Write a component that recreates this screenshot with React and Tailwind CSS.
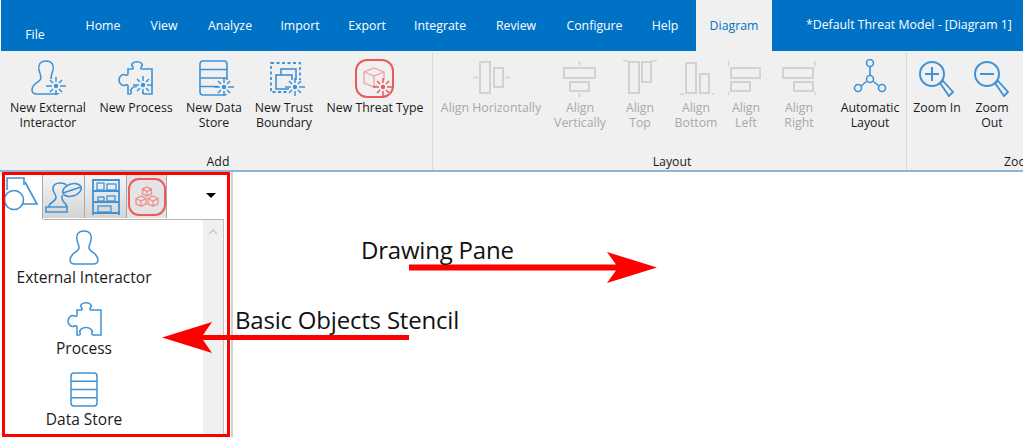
import React from "react";

const BLUE = "#3f92d6";
const GREY = "#d2d2d2";
const RED = "#e95b5b";

const personPath =
  "M15 1C9 1 7 5 8 10C8.6 13 10 15 10 18C10 22 1 23 1 30C1 33 3 34 6 34L24 34C27 34 29 33 29 30C29 23 20 22 20 18C20 15 21.4 13 22 10C23 5 21 1 15 1Z";
const puzzlePath =
  "M10 8L14 8C15.5 8 15.5 6.5 14.5 5.500C12.5 3 15 .8 19 .8C23 .8 25.5 3 23.5 5.500C22.5 6.500 22.5 8 24 8L34 8L34 33L26 33C24.5 33 24.5 31.5 25 30.500C26 28 23 25.500 19 25.500C15 25.500 12 28 13 30.500C13.5 31.500 13.5 33 12 33L10 33L10 25C10 23.500 8.500 23.500 7.500 24C5 25.500 1 23 1 19C1 15 5 12.500 7.500 14C8.500 14.500 10 14.500 10 13Z";

// little "new item" burst that sits on the ribbon icons
function Spark({ x, y, color = BLUE }) {
  return (
    <g stroke={color} strokeWidth="1.5" fill="none">
      <rect x={x - 6} y={y - 7} width="12" height="14" fill="#f0f0f0" stroke="none" />
      <circle cx={x} cy={y} r="2.2" fill={color} stroke="none" />
      <path
        d={`M${x} ${y - 9}V${y - 4}M${x} ${y + 4}V${y + 9}M${x - 10} ${y}H${x - 4}M${x + 4} ${y}H${x + 10}M${x - 6} ${y - 6}L${x - 3} ${y - 3}M${x + 6} ${y - 6}L${x + 3} ${y - 3}M${x - 6} ${y + 6}L${x - 3} ${y + 3}M${x + 6} ${y + 6}L${x + 3} ${y + 3}`}
      />
    </g>
  );
}

function RibbonIcon({ children, width = 44 }) {
  return (
    <svg width={width} height="40" viewBox={`0 0 ${width} 40`} fill="none" stroke={BLUE} strokeWidth="1.6">
      {children}
    </svg>
  );
}

const NewExternalIcon = () => (
  <RibbonIcon>
    <path d={personPath} transform="translate(5 1)" strokeWidth="1.5" />
    <Spark x={30} y={27} />
  </RibbonIcon>
);

const NewProcessIcon = () => (
  <RibbonIcon>
    <path d={puzzlePath} transform="translate(4 2)" strokeWidth="1.6" />
    <Spark x={29} y={26} />
  </RibbonIcon>
);

const NewDataIcon = () => (
  <RibbonIcon>
    <rect x="8" y="2" width="27" height="34" rx="3" />
    <path d="M8 10.5H35M8 19H35M8 27.5H35" />
    <Spark x={32} y={28} />
  </RibbonIcon>
);

const NewTrustIcon = () => (
  <RibbonIcon>
    <rect x="9" y="4" width="29" height="29" strokeDasharray="3 2.5" strokeWidth="1.8" />
    <rect x="19" y="10" width="15" height="12" />
    <rect x="14" y="16" width="16" height="14" fill="#f0f0f0" />
    <Spark x={33} y={28} />
  </RibbonIcon>
);

const NewThreatIcon = () => (
  <RibbonIcon>
    <rect x="3" y="1" width="37" height="37" rx="11" stroke={RED} strokeWidth="2" />
    <g stroke="#f0a0a0" strokeWidth="1.3">
      <path d="M21 9L31 13V24L21 28L11 24V13ZM11 13L21 17L31 13M21 17V28" />
    </g>
    <Spark x={30} y={28} color={RED} />
  </RibbonIcon>
);

const AlignH = () => (
  <RibbonIcon>
    <g stroke={GREY} strokeWidth="2">
      <rect x="11" y="3" width="10" height="31" />
      <rect x="25" y="9" width="9" height="19" />
      <path d="M4 18.5H9M36 18.5H41" strokeWidth="1.5" />
    </g>
  </RibbonIcon>
);

const AlignV = () => (
  <RibbonIcon>
    <g stroke={GREY} strokeWidth="2">
      <rect x="6" y="9" width="31" height="10" />
      <rect x="12" y="23" width="19" height="9" />
      <path d="M21.5 2V7M21.5 34V38" strokeWidth="1.5" />
    </g>
  </RibbonIcon>
);

const AlignTop = () => (
  <RibbonIcon>
    <g stroke={GREY} strokeWidth="2">
      <rect x="11" y="3" width="10" height="31" />
      <rect x="24" y="3" width="9" height="20" />
      <path d="M5 2H39" strokeWidth="1.5" strokeDasharray="5 22 7" />
    </g>
  </RibbonIcon>
);

const AlignBottom = () => (
  <RibbonIcon>
    <g stroke={GREY} strokeWidth="2">
      <rect x="12" y="4" width="10" height="30" />
      <rect x="26" y="15" width="9" height="19" />
      <path d="M6 35H40" strokeWidth="1.5" strokeDasharray="4 28 4" />
    </g>
  </RibbonIcon>
);

const AlignLeft = () => (
  <RibbonIcon>
    <g stroke={GREY} strokeWidth="2">
      <rect x="7" y="9" width="29" height="10" />
      <rect x="7" y="23" width="19" height="9" />
      <path d="M4.500 2V36" strokeWidth="1.5" strokeDasharray="5 26 6" />
    </g>
  </RibbonIcon>
);

const AlignRight = () => (
  <RibbonIcon>
    <g stroke={GREY} strokeWidth="2">
      <rect x="6" y="9" width="30" height="10" />
      <rect x="17" y="23" width="19" height="9" />
      <path d="M38 2V36" strokeWidth="1.5" strokeDasharray="5 26 6" />
    </g>
  </RibbonIcon>
);

const AutoLayoutIcon = () => (
  <RibbonIcon>
    <circle cx="22" cy="4" r="3.5" />
    <circle cx="22" cy="20" r="3.5" />
    <circle cx="10" cy="29" r="3.5" />
    <circle cx="34" cy="29" r="3.5" />
    <path d="M22 8V16M13 27L18.500 22.500M31 27L25.500 22.500" />
  </RibbonIcon>
);

const ZoomIcon = ({ plus }) => (
  <RibbonIcon>
    <circle cx="17" cy="15" r="12" strokeWidth="2" />
    <path d={plus ? "M10 15H24M17 8V22" : "M10 15H24"} strokeWidth="2" />
    <path d="M25 24L28 22L38 33L34 37Z" strokeWidth="1.8" />
  </RibbonIcon>
);

const ribbonAdd = [
  { w: "w-[88px]", Icon: NewExternalIcon, lines: ["New External", "Interactor"] },
  { w: "w-[88px]", Icon: NewProcessIcon, lines: ["New Process"] },
  { w: "w-[68px]", Icon: NewDataIcon, lines: ["New Data", "Store"] },
  { w: "w-[72px]", Icon: NewTrustIcon, lines: ["New Trust", "Boundary"] },
  { w: "w-[110px]", Icon: NewThreatIcon, lines: ["New Threat Type"] },
];

const ribbonLayout = [
  { w: "w-[106px]", Icon: AlignH, lines: ["Align Horizontally"], off: true },
  { w: "w-[72px]", Icon: AlignV, lines: ["Align", "Vertically"], off: true },
  { w: "w-[48px]", Icon: AlignTop, lines: ["Align", "Top"], off: true },
  { w: "w-[64px]", Icon: AlignBottom, lines: ["Align", "Bottom"], off: true },
  { w: "w-[36px]", Icon: AlignLeft, lines: ["Align", "Left"], off: true },
  { w: "w-[70px]", Icon: AlignRight, lines: ["Align", "Right"], off: true },
  { w: "w-[72px]", Icon: AutoLayoutIcon, lines: ["Automatic", "Layout"] },
];

function RibbonButton({ w, Icon, lines, off }) {
  return (
    <div className={`${w} shrink-0 flex flex-col items-center pt-[6px]`}>
      <div className="h-[41px] flex justify-center w-[44px] shrink-0">
        <Icon />
      </div>
      <div className={`text-[12.3px] leading-[15px] text-center whitespace-nowrap ${off ? "text-[#a9a9a9]" : "text-[#1a1a1a]"}`}>
        {lines.map((l) => (
          <div key={l}>{l}</div>
        ))}
      </div>
    </div>
  );
}

function RibbonGroup({ className, label, children }) {
  return (
    <div className={`h-full shrink-0 flex flex-col border-r border-[#d9d9d9] ${className}`}>
      <div className="flex flex-1">{children}</div>
      <div className="h-[20px] pt-[3px] flex justify-center text-[12.3px] leading-[18px] text-[#1a1a1a]">{label}</div>
    </div>
  );
}

const tabs = [
  { name: "File", w: "w-[68px]", cls: "pt-[26px]" },
  { name: "Home", w: "w-[68px]" },
  { name: "View", w: "w-[54px]" },
  { name: "Analyze", w: "w-[78px]" },
  { name: "Import", w: "w-[62px]" },
  { name: "Export", w: "w-[72px]" },
  { name: "Integrate", w: "w-[74px]" },
  { name: "Review", w: "w-[78px]" },
  { name: "Configure", w: "w-[79px]" },
  { name: "Help", w: "w-[62px]" },
];

export default function App() {
  return (
    <div className="relative w-[1023px] h-[437px] overflow-hidden bg-white font-['Open_Sans',sans-serif]">
      {/* TITLE / TABS */}
      <div className="ml-px h-[51px] bg-[#0072c6] flex text-white text-[12.3px]">
        {tabs.map((t) => (
          <div key={t.name} className={`${t.w} shrink-0 text-center ${t.cls || "pt-[17px]"}`}>
            {t.name}
          </div>
        ))}
        <div className="w-[76px] shrink-0 bg-[#f0f0f0] text-[#0072c6] text-center pt-[17px]">Diagram</div>
        <div className="ml-[34px] pt-[16px] whitespace-nowrap">*Default Threat Model - [Diagram 1]</div>
      </div>

      {/* RIBBON */}
      <div className="h-[121px] bg-[#f0f0f0] border-b-2 border-[#8fb4d4] flex pt-[2px]">
        <RibbonGroup className="w-[433px] pl-[4px]" label="Add">
          {ribbonAdd.map((b) => (
            <RibbonButton key={b.lines[0]} {...b} />
          ))}
        </RibbonGroup>
        <RibbonGroup className="w-[474px] pl-[5px]" label="Layout">
          {ribbonLayout.map((b) => (
            <RibbonButton key={b.lines.join()} {...b} />
          ))}
        </RibbonGroup>
        <div className="h-full flex flex-col">
          <div className="flex flex-1">
            <RibbonButton w="w-[60px]" Icon={() => <ZoomIcon plus />} lines={["Zoom In"]} />
            <RibbonButton w="w-[50px]" Icon={() => <ZoomIcon />} lines={["Zoom", "Out"]} />
          </div>
          <div className="h-[20px] pt-[3px] pl-[97px] text-[12.3px] leading-[18px] text-[#1a1a1a]">Zoom</div>
        </div>
      </div>

      {/* BODY */}
      <div className="flex h-[265px]">
        {/* Stencil panel */}
        <div className="ml-[2px] w-[228px] h-[265px] border-[3px] border-[#ff0000] flex flex-col shrink-0">
          <div className="h-[44px] flex">
            <div className="w-[38px] h-[44px] bg-white border-r border-[#a8a8a8] overflow-hidden">
              <svg width="37" height="36" viewBox="0 0 37 36" fill="none" stroke={BLUE} strokeWidth="1.6">
                <path d="M2 15V3H19V10" />
                <path d="M20 7L32 29H17" />
                <circle cx="9" cy="25" r="9.500" />
              </svg>
            </div>
            <div className="w-[42px] h-[43px] flex items-center justify-center border-r border-[#a8a8a8] bg-gradient-to-b from-[#f6f6f6] to-[#d4d4d4]">
              <svg width="37" height="32" viewBox="0 0 37 32" fill="none" stroke={BLUE} strokeWidth="1.6">
                <path d="M1 26H22V31H1Z" />
                <path d="M4 26C4 20 11 22 11 16C11 13 8 12 8 8C8 4 11 2 15 2C18 2 21 3 22 5" />
                <path d="M22 26C22 22 17 22 17 17C17 16 17 15 17.500 14" />
                <ellipse cx="27" cy="9" rx="9.500" ry="6" transform="rotate(-18 27 9)" />
                <path d="M18 12L36 6" />
              </svg>
            </div>
            <div className="w-[42px] h-[43px] flex items-center justify-center border-r border-[#a8a8a8] bg-gradient-to-b from-[#f6f6f6] to-[#d4d4d4]">
              <svg width="30" height="38" viewBox="0 0 30 38" fill="none" stroke={BLUE} strokeWidth="1.8">
                <path d="M2 1V37M28 1V37M2 2H28M2 13H28M2 24H28M2 35H28" />
                <rect x="6" y="5" width="7" height="7" strokeWidth="1.3" />
                <rect x="16" y="6" width="9" height="6" strokeWidth="1.3" />
                <rect x="7" y="19" width="6" height="4" strokeWidth="1.3" />
                <rect x="16" y="18" width="8" height="5" strokeWidth="1.3" />
                <rect x="7" y="28" width="13" height="6" strokeWidth="1.3" />
              </svg>
            </div>
            <div className="w-[40px] h-[43px] flex items-center justify-center border-r border-[#a8a8a8] bg-[#e4e4e4]">
              <svg width="38" height="38" viewBox="0 0 38 38" fill="none">
                <rect x="1" y="1" width="36" height="36" rx="10" stroke="#ee5a5a" strokeWidth="2" />
                <g stroke="#ee8a8a" strokeWidth="1.2">
                  <path d="M19 9L23.500 11V16L19 18L14.500 16V11ZM14.500 11L19 13.500L23.500 11M19 13.500V18" />
                  <path d="M13 18L18 20.500V26L13 28L8 26V20.500ZM8 20.500L13 23L18 20.500M13 23V28" />
                  <path d="M25 18L30 20.500V26L25 28L20 26V20.500ZM20 20.500L25 23L30 20.500M25 23V28" />
                </g>
              </svg>
            </div>
            <div className="flex-1 flex items-center justify-end pr-[11px] pb-[3px]">
              <div className="w-0 h-0 border-l-[5px] border-r-[5px] border-t-[5px] border-l-transparent border-r-transparent border-t-black"></div>
            </div>
          </div>
          <div className="h-px bg-[#b4b4b4] ml-[38px] mr-[3px]"></div>
          <div className="flex-1 flex min-h-0 pr-[3px]">
            <div className="flex-1 flex flex-col items-center pr-[40px] text-[15.5px] text-[#1a1a1a] leading-[20px] pt-[10px] overflow-hidden">
              <svg width="30" height="35" viewBox="0 0 30 35" fill="none" stroke={BLUE} strokeWidth="1.5" className="shrink-0">
                <path d={personPath} />
              </svg>
              <div className="mt-[2px] whitespace-nowrap">External Interactor</div>
              <svg width="35" height="34" viewBox="0 0 35 34" fill="none" stroke={BLUE} strokeWidth="1.5" className="shrink-0 mt-[15px]">
                <path d={puzzlePath} />
              </svg>
              <div className="mt-[2px]">Process</div>
              <svg width="28" height="35" viewBox="0 0 28 35" fill="none" stroke={BLUE} strokeWidth="1.5" className="shrink-0 mt-[14px]">
                <rect x="1" y="1" width="26" height="33" rx="3" />
                <path d="M1 9.200H27M1 17.500H27M1 25.800H27" />
              </svg>
              <div className="mt-[2px] whitespace-nowrap">Data Store</div>
            </div>
            <div className="w-[21px] shrink-0 bg-[#f0f0f0] border-r border-[#c4c4c4] flex justify-center pt-[9px]">
              <svg width="10" height="6" viewBox="0 0 10 6" fill="none" stroke="#c8c8c8" strokeWidth="1.5">
                <path d="M1 5L5 1L9 5" />
              </svg>
            </div>
          </div>
        </div>
        {/* Drawing pane */}
        <div className="ml-[1px] flex-1 border-l-2 border-[#d0d0d0] bg-white"></div>
      </div>

      {/* ANNOTATIONS */}
      <svg className="absolute left-0 top-0 pointer-events-none" width="1023" height="437" viewBox="0 0 1023 437" fill="#ff0000">
        <path d="M409 264.500H616L607 252L657 267.500L607 283L616 270.500H409Z" />
        <path d="M409 335H203L212 322L162 337.500L212 353L203 340H409Z" />
      </svg>
      <div className="absolute left-[361px] top-[234px] text-[24px] leading-[32px] text-[#111] whitespace-nowrap tracking-[-0.2px]">
        Drawing Pane
      </div>
      <div className="absolute left-[235px] top-[304px] text-[24px] leading-[32px] text-[#111] whitespace-nowrap tracking-[-0.2px]">
        Basic Objects Stencil
      </div>
    </div>
  );
}
